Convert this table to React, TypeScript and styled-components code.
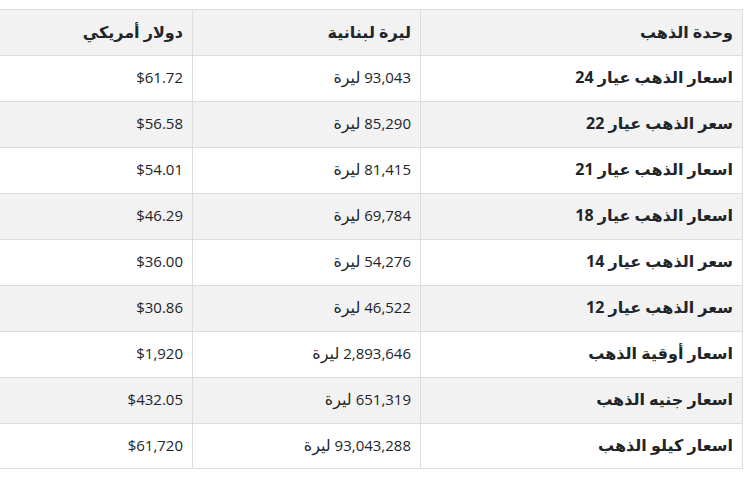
import styled, { createGlobalStyle } from "styled-components";

type Row = {
  unit: string;
  lbp: string;
  usd: string;
};

const rows: Row[] = [
  { unit: "اسعار الذهب عيار 24", lbp: "93,043", usd: "$61.72" },
  { unit: "سعر الذهب عيار 22", lbp: "85,290", usd: "$56.58" },
  { unit: "اسعار الذهب عيار 21", lbp: "81,415", usd: "$54.01" },
  { unit: "اسعار الذهب عيار 18", lbp: "69,784", usd: "$46.29" },
  { unit: "سعر الذهب عيار 14", lbp: "54,276", usd: "$36.00" },
  { unit: "سعر الذهب عيار 12", lbp: "46,522", usd: "$30.86" },
  { unit: "اسعار أوقية الذهب", lbp: "2,893,646", usd: "$1,920" },
  { unit: "اسعار جنيه الذهب", lbp: "651,319", usd: "$432.05" },
  { unit: "اسعار كيلو الذهب", lbp: "93,043,288", usd: "$61,720" },
];

const GlobalStyle = createGlobalStyle`
  html, body {
    margin: 0;
    padding: 0;
    background: #ffffff;
  }
  body {
    font-family: "Open Sans", "DejaVu Sans", sans-serif;
    color: #212529;
  }
`;

const Page = styled.div`
  padding: 9px 10px 0 0;
  direction: rtl;
`;

const Table = styled.table`
  width: 743px;
  border-collapse: collapse;
  table-layout: fixed;
  font-size: 15px;
`;

const HeadCell = styled.th<{ $w: number; $last?: boolean }>`
  box-sizing: border-box;
  width: ${({ $w }) => $w}px;
  height: 46px;
  padding: 0 9px 2px;
  text-align: right;
  font-weight: 700;
  font-size: 16px;
  background: #f2f2f2;
  border: 1px solid #dddddd;
  border-left: ${({ $last }) => ($last ? "none" : "1px solid #dddddd")};
`;

const BodyRow = styled.tr`
  &:nth-child(even) {
    background: #f2f2f2;
  }
`;

const Cell = styled.td<{ $bold?: boolean; $last?: boolean }>`
  box-sizing: border-box;
  height: 45.95px;
  padding: 0 9px 2px;
  text-align: right;
  font-weight: ${({ $bold }) => ($bold ? 700 : 400)};
  border: 1px solid #dddddd;
  border-left: ${({ $last }) => ($last ? "none" : "1px solid #dddddd")};
  white-space: nowrap;
`;

const Ar = styled.span`
  font-size: 16px;
`;

export default function App() {
  return (
    <>
      <GlobalStyle />
      <Page>
        <Table>
          <thead>
            <tr>
              <HeadCell $w={322}>وحدة الذهب</HeadCell>
              <HeadCell $w={228}>ليرة لبنانية</HeadCell>
              <HeadCell $w={193} $last>
                دولار أمريكي
              </HeadCell>
            </tr>
          </thead>
          <tbody>
            {rows.map((r) => (
              <BodyRow key={r.unit}>
                <Cell $bold>
                  <Ar>{r.unit}</Ar>
                </Cell>
                <Cell>
                  {r.lbp} <Ar>ليرة</Ar>
                </Cell>
                <Cell $last>{r.usd}</Cell>
              </BodyRow>
            ))}
          </tbody>
        </Table>
      </Page>
    </>
  );
}
